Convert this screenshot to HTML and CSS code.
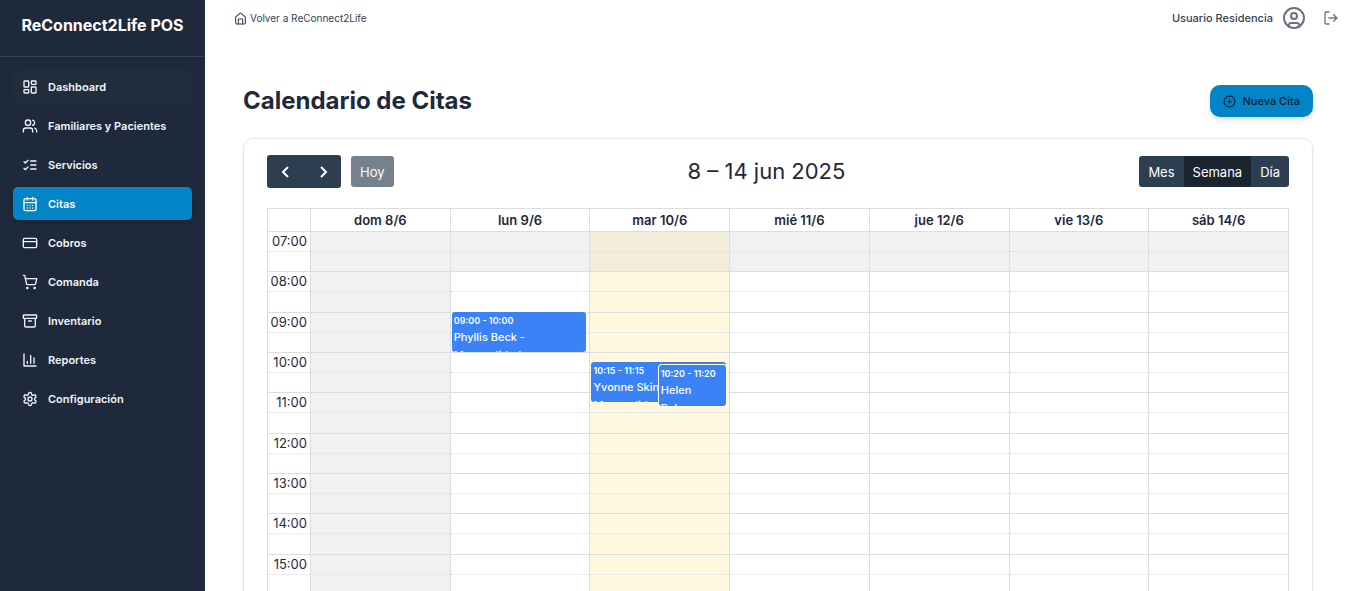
FILE: index.html
```html
<!DOCTYPE html>
<html lang="es">

	<head>
		<meta charset="utf-8" />
		<meta name="viewport" content="width=device-width, initial-scale=1" />
		<title>Calendario de Citas</title>
		<link rel="stylesheet" href="styles.css">
	</head>

	<body>
		<div class="app">
			<aside class="sidebar">
				<div class="brand">ReConnect2Life POS</div>
				<nav class="menu">
					<a href="#" class="item hover">
						<svg class="icon" viewBox="0 0 24 24"><rect x="3" y="3" width="7" height="9" rx="1"/><rect x="14" y="3" width="7" height="5" rx="1"/><rect x="14" y="12" width="7" height="9" rx="1"/><rect x="3" y="16" width="7" height="5" rx="1"/></svg>
						<span>Dashboard</span>
					</a>
					<a href="#" class="item">
						<svg class="icon" viewBox="0 0 24 24"><path d="M16 21v-2a4 4 0 0 0-4-4H6a4 4 0 0 0-4 4v2"/><circle cx="9" cy="7" r="4"/><path d="M22 21v-2a4 4 0 0 0-3-3.87M16 3.13a4 4 0 0 1 0 7.75"/></svg>
						<span>Familiares y Pacientes</span>
					</a>
					<a href="#" class="item">
						<svg class="icon" viewBox="0 0 24 24"><path d="m3 17 2 2 4-4M3 7l2 2 4-4M13 6h8M13 12h8M13 18h8"/></svg>
						<span>Servicios</span>
					</a>
					<a href="#" class="item active">
						<svg class="icon" viewBox="0 0 24 24"><path d="M8 2v4M16 2v4M3 10h18"/><rect x="3" y="4" width="18" height="18" rx="2"/><path d="M8 14h.01M12 14h.01M16 14h.01M8 18h.01M12 18h.01M16 18h.01"/></svg>
						<span>Citas</span>
					</a>
					<a href="#" class="item">
						<svg class="icon" viewBox="0 0 24 24"><rect x="2" y="5" width="20" height="14" rx="2"/><path d="M2 10h20"/></svg>
						<span>Cobros</span>
					</a>
					<a href="#" class="item">
						<svg class="icon" viewBox="0 0 24 24"><circle cx="8" cy="21" r="1"/><circle cx="19" cy="21" r="1"/><path d="M2.05 2.05h2l2.66 12.42a2 2 0 0 0 2 1.58h9.78a2 2 0 0 0 1.95-1.57l1.65-7.43H5.12"/></svg>
						<span>Comanda</span>
					</a>
					<a href="#" class="item">
						<svg class="icon" viewBox="0 0 24 24"><rect x="2" y="3" width="20" height="5" rx="1"/><path d="M4 8v11a2 2 0 0 0 2 2h12a2 2 0 0 0 2-2V8M10 12h4"/></svg>
						<span>Inventario</span>
					</a>
					<a href="#" class="item">
						<svg class="icon" viewBox="0 0 24 24"><path d="M3 3v18h18M18 17V9M13 17V5M8 17v-3"/></svg>
						<span>Reportes</span>
					</a>
					<a href="#" class="item">
						<svg class="icon" viewBox="0 0 24 24"><path d="M12.22 2h-.44a2 2 0 0 0-2 2v.18a2 2 0 0 1-1 1.73l-.43.25a2 2 0 0 1-2 0l-.15-.08a2 2 0 0 0-2.73.73l-.22.38a2 2 0 0 0 .73 2.73l.15.1a2 2 0 0 1 1 1.72v.51a2 2 0 0 1-1 1.74l-.15.09a2 2 0 0 0-.73 2.73l.22.38a2 2 0 0 0 2.73.73l.15-.08a2 2 0 0 1 2 0l.43.25a2 2 0 0 1 1 1.73V20a2 2 0 0 0 2 2h.44a2 2 0 0 0 2-2v-.18a2 2 0 0 1 1-1.73l.43-.25a2 2 0 0 1 2 0l.15.08a2 2 0 0 0 2.73-.73l.22-.39a2 2 0 0 0-.73-2.73l-.15-.08a2 2 0 0 1-1-1.74v-.5a2 2 0 0 1 1-1.74l.15-.09a2 2 0 0 0 .73-2.73l-.22-.38a2 2 0 0 0-2.73-.73l-.15.08a2 2 0 0 1-2 0l-.43-.25a2 2 0 0 1-1-1.73V4a2 2 0 0 0-2-2z"/><circle cx="12" cy="12" r="3"/></svg>
						<span>Configuración</span>
					</a>
				</nav>
			</aside>

			<div class="main">
				<header class="topbar">
					<a href="#" class="back">
						<svg class="icon small" viewBox="0 0 24 24"><path d="M3 10a2 2 0 0 1 .7-1.5l7-6a2 2 0 0 1 2.6 0l7 6A2 2 0 0 1 21 10v10a2 2 0 0 1-2 2H5a2 2 0 0 1-2-2z"/><path d="M8 22v-8a1 1 0 0 1 1-1h6a1 1 0 0 1 1 1v8"/></svg>
						<span>Volver a ReConnect2Life</span>
					</a>
					<div class="user">
						<span>Usuario Residencia</span>
						<svg class="icon avatar" viewBox="0 0 24 24"><circle cx="12" cy="12" r="10"/><circle cx="12" cy="10" r="3"/><path d="M7 20.66V19a2 2 0 0 1 2-2h6a2 2 0 0 1 2 2v1.66"/></svg>
						<button class="logout" aria-label="Salir">
							<svg class="icon" viewBox="0 0 24 24"><path d="M9 21H5a2 2 0 0 1-2-2V5a2 2 0 0 1 2-2h4M16 17l5-5-5-5M21 12H9"/></svg>
						</button>
					</div>
				</header>

				<main class="content">
					<div class="heading">
						<h1>Calendario de Citas</h1>
						<button class="new">
							<svg class="icon small" viewBox="0 0 24 24"><circle cx="12" cy="12" r="10"/><path d="M8 12h8M12 8v8"/></svg>
							<span>Nueva Cita</span>
						</button>
					</div>

					<section class="card">
						<div class="toolbar">
							<div class="left">
								<div class="group arrows">
									<button aria-label="Anterior"><svg class="chevron" viewBox="0 0 16 16"><path d="M10 3 5 8l5 5"/></svg></button>
									<button aria-label="Siguiente"><svg class="chevron" viewBox="0 0 16 16"><path d="m6 3 5 5-5 5"/></svg></button>
								</div>
								<div class="group">
									<button disabled>Hoy</button>
								</div>
							</div>
							<h2>8 – 14 jun 2025</h2>
							<div class="group views">
								<button>Mes</button>
								<button class="on">Semana</button>
								<button>Día</button>
							</div>
						</div>

						<table class="week">
							<colgroup>
								<col class="hours"><col class="closed"><col><col class="today"><col><col><col><col>
							</colgroup>
							<thead>
								<tr><th></th><th>dom 8/6</th><th>lun 9/6</th><th>mar 10/6</th><th>mié 11/6</th><th>jue 12/6</th><th>vie 13/6</th><th>sáb 14/6</th></tr>
							</thead>
							<!-- dos filas de media hora por cada hora -->
							<tbody>
								<tr class="off"><th>07:00</th><td></td><td></td><td></td><td></td><td></td><td></td><td></td></tr>
								<tr class="off half"><th></th><td></td><td></td><td></td><td></td><td></td><td></td><td></td></tr>
								<tr><th>08:00</th><td></td><td></td><td></td><td></td><td></td><td></td><td></td></tr>
								<tr class="half"><th></th><td></td><td></td><td></td><td></td><td></td><td></td><td></td></tr>
								<tr>
									<th>09:00</th>
									<td></td>
									<td class="booked">
										<div class="lane">
											<a href="#" class="event"><small>09:00 - 10:00</small><span>Phyllis Beck - Mensualidad</span></a>
										</div>
									</td>
									<td></td><td></td><td></td><td></td><td></td>
								</tr>
								<tr class="half"><th></th><td></td><td></td><td></td><td></td><td></td><td></td><td></td></tr>
								<tr>
									<th>10:00</th>
									<td></td>
									<td></td>
									<td class="booked">
										<div class="lane quarter">
											<a href="#" class="event"><small>10:15 - 11:15</small><span>Yvonne Skinner - Mensualidad</span></a>
											<a href="#" class="event over"><small>10:20 - 11:20</small><span>Helen Baker</span></a>
										</div>
									</td>
									<td></td><td></td><td></td><td></td>
								</tr>
								<tr class="half"><th></th><td></td><td></td><td></td><td></td><td></td><td></td><td></td></tr>
								<tr><th>11:00</th><td></td><td></td><td></td><td></td><td></td><td></td><td></td></tr>
								<tr class="half"><th></th><td></td><td></td><td></td><td></td><td></td><td></td><td></td></tr>
								<tr><th>12:00</th><td></td><td></td><td></td><td></td><td></td><td></td><td></td></tr>
								<tr class="half"><th></th><td></td><td></td><td></td><td></td><td></td><td></td><td></td></tr>
								<tr><th>13:00</th><td></td><td></td><td></td><td></td><td></td><td></td><td></td></tr>
								<tr class="half"><th></th><td></td><td></td><td></td><td></td><td></td><td></td><td></td></tr>
								<tr><th>14:00</th><td></td><td></td><td></td><td></td><td></td><td></td><td></td></tr>
								<tr class="half"><th></th><td></td><td></td><td></td><td></td><td></td><td></td><td></td></tr>
								<tr><th>15:00</th><td></td><td></td><td></td><td></td><td></td><td></td><td></td></tr>
								<tr class="half"><th></th><td></td><td></td><td></td><td></td><td></td><td></td><td></td></tr>
							</tbody>
						</table>
					</section>
				</main>
			</div>
		</div>
	</body>

</html>
```
FILE: styles.css
```css
* {
	margin: 0;
	padding: 0;
	box-sizing: border-box;
}

body {
	font-family: Inter, "Liberation Sans", sans-serif;
	font-size: 13px;
	line-height: 20px;
	color: #1e293b;
	background: #fff;
}

a {
	color: inherit;
	text-decoration: none;
}

button {
	font: inherit;
	border: 0;
	cursor: pointer;
}

.app {
	display: flex;
	height: 100vh;
	overflow: hidden;
}

.icon {
	width: 16px;
	height: 16px;
	flex: none;
	fill: none;
	stroke: currentColor;
	stroke-width: 2;
	stroke-linecap: round;
	stroke-linejoin: round;
}

.icon.small {
	width: 13px;
	height: 13px;
}

/* menu lateral */
.sidebar {
	width: 205px;
	flex: none;
	background: #1e293b;
	color: #f1f5f9;
}

.brand {
	height: 57px;
	padding-top: 15px;
	text-align: center;
	font-size: 16px;
	font-weight: 700;
	color: #fff;
	border-bottom: 1px solid #334155;
}

.menu {
	display: flex;
	flex-direction: column;
	gap: 6px;
	padding: 13px;
}

.item {
	display: flex;
	align-items: center;
	gap: 10px;
	height: 33px;
	padding: 0 9px;
	border-radius: 5px;
	font-size: 11px;
	font-weight: 600;
}

.item.hover {
	background: #212c3d;
}

.item.active {
	background: #0284c7;
	color: #fff;
	box-shadow: 0 3px 5px rgba(0, 0, 0, .12);
}

/* zona principal */
.main {
	flex: 1;
	min-width: 0;
}

.topbar {
	display: flex;
	justify-content: space-between;
	align-items: center;
	height: 36px;
	padding: 0 12px 0 29px;
	color: #334155;
}

.back {
	display: flex;
	align-items: center;
	gap: 3px;
	font-size: 10px;
}

.user {
	display: flex;
	align-items: center;
	gap: 9px;
	font-size: 11px;
	font-weight: 500;
}

.avatar {
	width: 24px;
	height: 24px;
	color: #6b7280;
}

.logout {
	display: flex;
	margin-left: 8px;
	background: none;
	color: #6b7280;
}

.content {
	padding: 49px 38px;
}

.heading {
	display: flex;
	justify-content: space-between;
	align-items: center;
	margin-bottom: 21px;
}

h1 {
	font-size: 24px;
	font-weight: 700;
	line-height: 32px;
}

.new {
	display: flex;
	align-items: center;
	gap: 6px;
	height: 32px;
	padding: 0 13px;
	border-radius: 10px;
	background: #0284c7;
	color: #0f172a;
	font-size: 11px;
	font-weight: 500;
	box-shadow: 0 3px 5px rgba(0, 0, 0, .12);
}

.card {
	padding: 16px 23px 23px;
	border: 1px solid #e5e7eb;
	border-radius: 10px;
	box-shadow: 0 1px 3px rgba(0, 0, 0, .08);
}

.toolbar,
.left {
	display: flex;
	align-items: center;
}

.toolbar {
	justify-content: space-between;
	height: 33px;
	margin-bottom: 20px;
}

.left {
	gap: 10px;
}

h2 {
	font-size: 22px;
	font-weight: 400;
	line-height: 33px;
}

.group {
	display: flex;
	border-radius: 3px;
	overflow: hidden;
}

.group button {
	height: 31px;
	padding: 0 9px;
	background: #2c3e50;
	color: #fff;
	font-size: 13px;
	font-weight: 400;
}

.group .on {
	background: #1a252f;
}

.group button:disabled {
	opacity: .65;
}

.arrows button {
	display: flex;
	align-items: center;
	justify-content: center;
	width: 37px;
	height: 33px;
}

.chevron {
	width: 16px;
	height: 16px;
	flex: none;
	fill: none;
	stroke: currentColor;
	stroke-width: 2;
}

/* calendario semanal */
.week {
	width: 100%;
	height: 387px;
	table-layout: fixed;
	border-collapse: collapse;
}

.week th,
.week td {
	height: 20px;
	border: 1px solid #ddd;
	line-height: 19px;
}

.week thead th {
	height: 23px;
	background: #fff;
	font-weight: 600;
}

.week tbody th {
	padding-right: 3px;
	text-align: right;
	font-weight: 400;
	border-bottom-style: dotted;
}

.week tbody td {
	border-bottom-style: dotted;
}

.week .half th,
.week .half td {
	border-top-style: dotted;
	border-bottom-style: solid;
}

.hours {
	width: 43px;
}

.closed {
	background: #f1f1f1;
}

.today {
	background: #fff8df;
}

.off td {
	background: #f1f1f1;
}

.off td:nth-child(4) {
	background: #f2eedb;
}

.booked {
	position: relative;
}

/* las citas flotan sobre las filas de la tabla */
.lane {
	position: absolute;
	z-index: 1;
	top: -1px;
	left: 1px;
	right: 3px;
}

.lane.quarter {
	top: 9px;
}

.event {
	display: block;
	height: 40px;
	padding: 2px 2px 0;
	border-radius: 3px;
	overflow: hidden;
	background: #3b82f6;
	color: #fff;
	font-size: 11px;
	font-weight: 500;
	line-height: 18px;
}

.event small {
	display: block;
	font-size: 9px;
	font-weight: 600;
	line-height: 14px;
	white-space: nowrap;
}

.event span {
	display: block;
}

.event.over {
	position: absolute;
	top: 3px;
	left: 50%;
	right: 0;
	height: 41px;
	box-shadow: 0 0 0 1px #fff;
}
```
